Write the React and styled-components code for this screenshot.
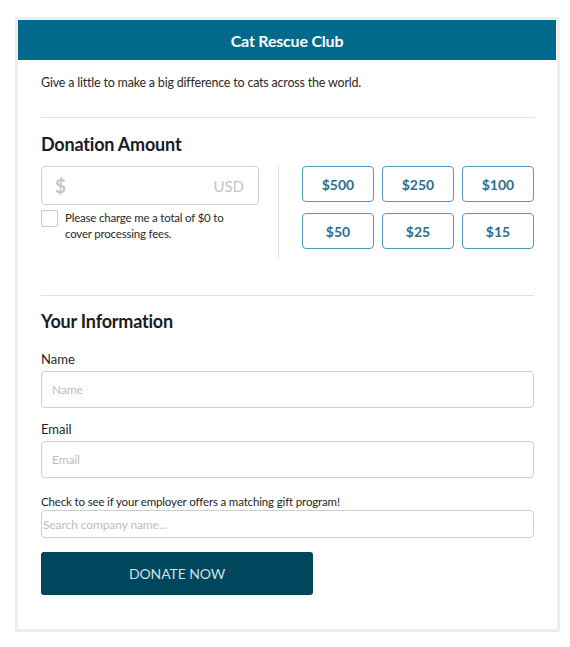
import React from 'react'
import styled, { createGlobalStyle } from 'styled-components'

const GlobalStyle = createGlobalStyle`
  body {
    margin: 0;
    background: #ffffff;
    font-family: Lato, "Open Sans", sans-serif;
    color: #222;
  }
  * { box-sizing: border-box; }
`

const Page = styled.div`
  padding: 17px 10px 14px 15px;
`

const Card = styled.div`
  width: 545px;
  border: 3px solid #eeeeee;
  background: #fff;
`

const Header = styled.div`
  height: 40px;
  margin-right: 1px;
  background: #016a8c;
  color: #fff;
  font-weight: 700;
  font-size: 16px;
  letter-spacing: -0.2px;
  display: flex;
  align-items: center;
  justify-content: center;
`

const Body = styled.div`
  padding: 13px 23px 34px 23px;
`

const Intro = styled.p`
  margin: 0;
  font-size: 12.5px;
  letter-spacing: -0.2px;
  line-height: 20px;
  color: #2a2a2a;
`

const Divider = styled.hr`
  border: 0;
  border-top: 1px solid #e2e2e2;
  margin: ${p => p.$top}px 0 0 0;
`

const Heading = styled.h2`
  margin: ${p => p.$top}px 0 0 0;
  font-size: 18px;
  line-height: 24px;
  font-weight: 700;
  letter-spacing: -0.2px;
  color: #1c1c1c;
`

const AmountRow = styled.div`
  display: flex;
  margin-top: 10px;
  height: 92px;
`

const AmountColumn = styled.div`
  width: 218px;
`

const AmountBox = styled.div`
  height: 39px;
  border: 1px solid #d2d2d2;
  border-radius: 4px;
  display: flex;
  align-items: center;
  justify-content: space-between;
  padding: 0 14px 0 13px;
  color: #c4c4c4;
`

const Dollar = styled.span`
  font-size: 19px;
  font-weight: 700;
`

const Currency = styled.span`
  font-size: 15px;
`

const FeeRow = styled.label`
  display: flex;
  gap: 7px;
  margin-top: 5px;
  font-size: 11.5px;
  letter-spacing: -0.2px;
  line-height: 16px;
  color: #2a2a2a;
`

const FeeText = styled.span`
  max-width: 166px;
`

const Check = styled.span`
  flex: none;
  width: 17px;
  height: 17px;
  border: 1px solid #c8c8c8;
  border-radius: 2px;
`

const VRule = styled.div`
  width: 1px;
  background: #dcdcdc;
  margin: 0 23px 0 19px;
`

const PresetGrid = styled.div`
  flex: 1;
  display: grid;
  grid-template-columns: repeat(3, 1fr);
  grid-auto-rows: 36px;
  column-gap: 8px;
  row-gap: 11px;
`

const Preset = styled.button`
  border: 1.5px solid #4f9cb9;
  border-radius: 4px;
  background: #fff;
  color: #2d6f8c;
  font-family: Lato, sans-serif;
  font-weight: 700;
  font-size: 14px;
  padding: 0;
`

const Label = styled.div`
  margin-top: ${p => p.$top}px;
  font-size: ${p => p.$size || 13}px;
  letter-spacing: ${p => p.$track || 0}px;
  line-height: ${p => p.$line || 18}px;
  color: #1f1f1f;
`

const Field = styled.input`
  display: block;
  width: 100%;
  height: ${p => p.$h || 37}px;
  margin-top: ${p => p.$top ?? 3}px;
  border: 1px solid #cfcfcf;
  border-radius: 4px;
  padding: 0 ${p => p.$pad ?? 10}px;
  font-family: Lato, sans-serif;
  font-size: 12px;
  letter-spacing: -0.1px;
  color: #333;
  outline: none;
  &::placeholder { color: #bdbdbd; }
`

const DonateButton = styled.button`
  display: block;
  margin-top: 14px;
  width: 272px;
  height: 43px;
  border: 0;
  border-radius: 3px;
  background: #00465c;
  color: #cfe1e8;
  font-family: Lato, sans-serif;
  font-size: 14px;
  letter-spacing: -0.1px;
  text-transform: uppercase;
`

const presets = ['$500', '$250', '$100', '$50', '$25', '$15']

export default function App() {
  return (
    <Page>
      <GlobalStyle />
      <Card>
        <Header>Cat Rescue Club</Header>
        <Body>
          <Intro>Give a little to make a big difference to cats across the world.</Intro>
          <Divider $top={24} />
          <Heading $top={14}>Donation Amount</Heading>
          <AmountRow>
            <AmountColumn>
              <AmountBox>
                <Dollar>$</Dollar>
                <Currency>USD</Currency>
              </AmountBox>
              <FeeRow>
                <Check />
                <FeeText>Please charge me a total of $0 to cover processing fees.</FeeText>
              </FeeRow>
            </AmountColumn>
            <VRule />
            <PresetGrid>
              {presets.map(p => <Preset key={p}>{p}</Preset>)}
            </PresetGrid>
          </AmountRow>
          <Divider $top={37} />
          <Heading $top={13}>Your Information</Heading>
          <Label $top={17}>Name</Label>
          <Field placeholder="Name" />
          <Label $top={12}>Email</Label>
          <Field placeholder="Email" />
          <Label $top={16} $size={11.5} $track={-0.15} $line={16}>Check to see if your employer offers a matching gift program!</Label>
          <Field placeholder="Search company name..." $h={28} $top={0} $pad={1} />
          <DonateButton>Donate Now</DonateButton>
        </Body>
      </Card>
    </Page>
  )
}
